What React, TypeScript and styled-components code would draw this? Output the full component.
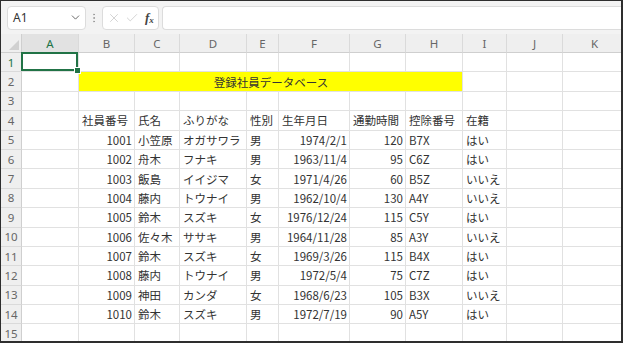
import { Fragment } from "react";
import styled, { createGlobalStyle } from "styled-components";
import { ChevronDown, X, Check, EllipsisVertical } from "lucide-react";

const GlobalStyle = createGlobalStyle`
  html, body {
    margin: 0;
    padding: 0;
    background: #fff;
  }
  * {
    box-sizing: border-box;
  }
`;

const Frame = styled.div`
  width: 623px;
  height: 343px;
  border-top: 1px solid #2e2e2e;
  border-left: 1px solid #2e2e2e;
  border-right: 2px solid #2e2e2e;
  border-bottom: 2px solid #2e2e2e;
  overflow: hidden;
  display: flex;
  flex-direction: column;
  background: #fff;
  font-family: "Noto Sans CJK JP", "Noto Sans", sans-serif;
`;

const FormulaBar = styled.div`
  height: 33px;
  flex-shrink: 0;
  background: #f3f3f3;
  display: flex;
  align-items: center;
  padding-left: 6px;
`;

const NameBox = styled.div`
  width: 79px;
  height: 24px;
  background: #fff;
  border: 1px solid #dcdcdc;
  border-radius: 4px;
  display: flex;
  align-items: center;
  justify-content: space-between;
  padding: 0 3px 0 5px;
  font-family: "Noto Sans", sans-serif;
  font-size: 12px;
  color: #333;
`;

const Grip = styled.div`
  width: 16px;
  display: flex;
  justify-content: center;
  color: #9a9a9a;
`;

const FxBox = styled.div`
  width: 57px;
  height: 24px;
  background: #fff;
  border: 1px solid #dcdcdc;
  border-radius: 4px;
  display: flex;
  align-items: center;
  gap: 4px;
  padding-left: 4px;
  color: #c2c2c2;
`;

const Fx = styled.span`
  font-family: "Liberation Serif", serif;
  font-style: italic;
  font-weight: bold;
  font-size: 13px;
  color: #444;
  margin-left: 2px;

  sub {
    font-size: 9px;
    vertical-align: -1px;
  }
`;

const FormulaInput = styled.div`
  flex: 1;
  height: 24px;
  margin-left: 3px;
  background: #fff;
  border: 1px solid #dcdcdc;
  border-right: none;
  border-radius: 4px 0 0 4px;
`;

const Sheet = styled.div`
  display: grid;
  grid-template-columns: 21px 57px 56px 45px 67px 32px 71px 56px 57px 44px 56px 64px;
  grid-template-rows: 19px;
  grid-auto-rows: 19.4px;
  font-size: 11.5px;
  color: #333;
`;

const Corner = styled.div`
  background: #efefef;
  border-right: 1px solid #cfcfcf;
  border-bottom: 1px solid #cfcfcf;
  display: flex;
  align-items: flex-end;
  justify-content: flex-end;
  padding: 0 2px 2px 0;
`;

const ColHeader = styled.div<{ $active?: boolean }>`
  background: ${(p) => (p.$active ? "#e2e2e2" : "#efefef")};
  border-right: 1px solid #dadada;
  border-bottom: 1px solid #cfcfcf;
  font-family: "Noto Sans", sans-serif;
  font-size: 11.5px;
  color: ${(p) => (p.$active ? "#217346" : "#666")};
  display: flex;
  align-items: center;
  justify-content: center;
`;

const RowHeader = styled.div<{ $active?: boolean }>`
  background: #efefef;
  border-right: 1px solid #cfcfcf;
  border-bottom: 1px solid #dadada;
  font-family: "Noto Sans", sans-serif;
  font-size: 11.5px;
  color: ${(p) => (p.$active ? "#217346" : "#666")};
  display: flex;
  align-items: center;
  justify-content: center;
`;

const Cell = styled.div<{ $align?: "left" | "right" | "center" }>`
  border-right: 1px solid #e1e1e1;
  border-bottom: 1px solid #e1e1e1;
  display: flex;
  align-items: center;
  justify-content: ${(p) =>
    p.$align === "right" ? "flex-end" : p.$align === "center" ? "center" : "flex-start"};
  padding: 0 2px 0 3px;
  white-space: nowrap;
  overflow: hidden;
`;

const SelectedCell = styled(Cell)`
  position: relative;
  overflow: visible;

  &::after {
    content: "";
    position: absolute;
    inset: -1px 0 0 -1px;
    border: 2px solid #217346;
  }

  &::before {
    content: "";
    position: absolute;
    right: -3px;
    bottom: -3px;
    width: 5px;
    height: 5px;
    background: #217346;
    border: 1px solid #fff;
    z-index: 1;
  }
`;

const TitleCell = styled(Cell)`
  grid-column: span 7;
  background: #ffff00;
  justify-content: center;
  color: #333;
`;

const columns = ["A", "B", "C", "D", "E", "F", "G", "H", "I", "J", "K"];

const fieldNames = ["社員番号", "氏名", "ふりがな", "性別", "生年月日", "通勤時間", "控除番号", "在籍"];

const records = [
  ["1001", "小笠原", "オガサワラ", "男", "1974/2/1", "120", "B7X", "はい"],
  ["1002", "舟木", "フナキ", "男", "1963/11/4", "95", "C6Z", "はい"],
  ["1003", "飯島", "イイジマ", "女", "1971/4/26", "60", "B5Z", "いいえ"],
  ["1004", "藤内", "トウナイ", "男", "1962/10/4", "130", "A4Y", "いいえ"],
  ["1005", "鈴木", "スズキ", "女", "1976/12/24", "115", "C5Y", "はい"],
  ["1006", "佐々木", "ササキ", "男", "1964/11/28", "85", "A3Y", "いいえ"],
  ["1007", "鈴木", "スズキ", "女", "1969/3/26", "115", "B4X", "はい"],
  ["1008", "藤内", "トウナイ", "男", "1972/5/4", "75", "C7Z", "はい"],
  ["1009", "神田", "カンダ", "女", "1968/6/23", "105", "B3X", "いいえ"],
  ["1010", "鈴木", "スズキ", "男", "1972/7/19", "90", "A5Y", "はい"],
];

// columns holding numbers / dates are right aligned like Excel
const rightAligned = [0, 4, 5];

function EmptyCells({ count }: { count: number }) {
  return (
    <>
      {Array.from({ length: count }, (_, i) => (
        <Cell key={i} />
      ))}
    </>
  );
}

export default function App() {
  return (
    <>
      <GlobalStyle />
      <Frame>
        <FormulaBar>
          <NameBox>
            <span>A1</span>
            <ChevronDown size={13} strokeWidth={1.6} color="#555" />
          </NameBox>
          <Grip>
            <EllipsisVertical size={12} strokeWidth={2} />
          </Grip>
          <FxBox>
            <X size={14} strokeWidth={1.2} />
            <Check size={14} strokeWidth={1.2} />
            <Fx>
              f<sub>x</sub>
            </Fx>
          </FxBox>
          <FormulaInput />
        </FormulaBar>

        <Sheet>
          <Corner>
            <svg width="10" height="10" viewBox="0 0 10 10">
              <polygon points="10,0 10,10 0,10" fill="#d0d0d0" />
            </svg>
          </Corner>
          {columns.map((c) => (
            <ColHeader key={c} $active={c === "A"}>
              {c}
            </ColHeader>
          ))}

          <RowHeader $active>1</RowHeader>
          <SelectedCell />
          <EmptyCells count={10} />

          <RowHeader>2</RowHeader>
          <Cell />
          <TitleCell>登録社員データベース</TitleCell>
          <EmptyCells count={3} />

          <RowHeader>3</RowHeader>
          <EmptyCells count={11} />

          <RowHeader>4</RowHeader>
          <Cell />
          {fieldNames.map((f) => (
            <Cell key={f}>{f}</Cell>
          ))}
          <EmptyCells count={2} />

          {records.map((r, i) => (
            <Fragment key={r[0]}>
              <RowHeader>{i + 5}</RowHeader>
              <Cell />
              {r.map((v, j) => (
                <Cell key={j} $align={rightAligned.includes(j) ? "right" : "left"}>
                  {v}
                </Cell>
              ))}
              <EmptyCells count={2} />
            </Fragment>
          ))}

          <RowHeader>15</RowHeader>
          <EmptyCells count={11} />
        </Sheet>
      </Frame>
    </>
  );
}
